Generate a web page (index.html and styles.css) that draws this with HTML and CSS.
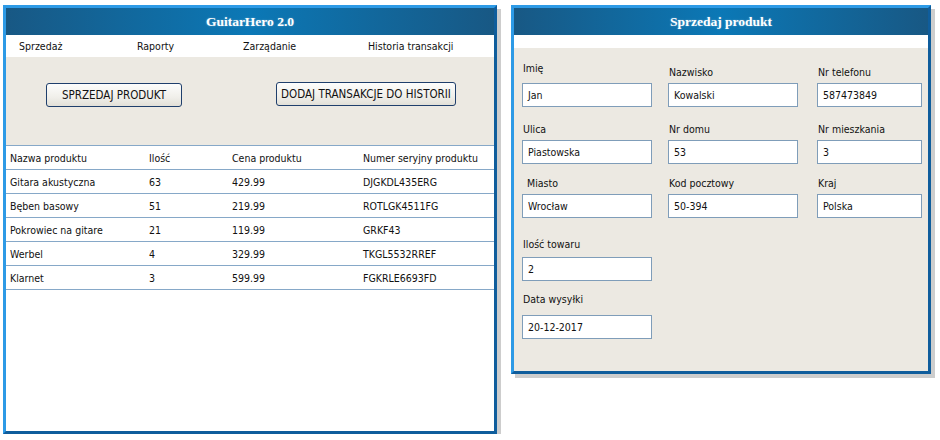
FILE: index.html
```html
<!DOCTYPE html>
<html lang="pl">
<head>
<meta charset="utf-8">
<title>GuitarHero 2.0</title>
<link rel="stylesheet" href="styles.css">
</head>
<body>
<div class="desk">
  <section class="win win-main">
    <header class="win-title">GuitarHero 2.0</header>
    <nav class="menu">
      <span>Sprzedaż</span>
      <span>Raporty</span>
      <span>Zarządanie</span>
      <span>Historia transakcji</span>
    </nav>
    <div class="toolbar">
      <button class="btn btn-sell">SPRZEDAJ PRODUKT</button>
      <button class="btn btn-add">DODAJ TRANSAKCJE DO HISTORII</button>
    </div>
    <div class="table">
      <div class="row head"><span>Nazwa produktu</span><span>Ilość</span><span>Cena produktu</span><span>Numer seryjny produktu</span></div>
      <div class="row"><span>Gitara akustyczna</span><span>63</span><span>429.99</span><span>DJGKDL435ERG</span></div>
      <div class="row"><span>Bęben basowy</span><span>51</span><span>219.99</span><span>ROTLGK4511FG</span></div>
      <div class="row"><span>Pokrowiec na gitare</span><span>21</span><span>119.99</span><span>GRKF43</span></div>
      <div class="row"><span>Werbel</span><span>4</span><span>329.99</span><span>TKGL5532RREF</span></div>
      <div class="row"><span>Klarnet</span><span>3</span><span>599.99</span><span>FGKRLE6693FD</span></div>
    </div>
  </section>

  <section class="win win-form">
    <header class="win-title">Sprzedaj produkt</header>
    <div class="strip"></div>
    <div class="form">
      <div class="frow r1">
        <label class="field"><span class="lbl up">Imię</span><span class="inp">Jan</span></label>
        <label class="field"><span class="lbl">Nazwisko</span><span class="inp">Kowalski</span></label>
        <label class="field narrow"><span class="lbl">Nr telefonu</span><span class="inp">587473849</span></label>
      </div>
      <div class="frow r2">
        <label class="field"><span class="lbl">Ulica</span><span class="inp">Piastowska</span></label>
        <label class="field"><span class="lbl">Nr domu</span><span class="inp">53</span></label>
        <label class="field narrow"><span class="lbl">Nr mieszkania</span><span class="inp">3</span></label>
      </div>
      <div class="frow r3">
        <label class="field"><span class="lbl shift">Miasto</span><span class="inp">Wrocław</span></label>
        <label class="field"><span class="lbl">Kod pocztowy</span><span class="inp">50-394</span></label>
        <label class="field narrow"><span class="lbl">Kraj</span><span class="inp">Polska</span></label>
      </div>
      <div class="frow r4">
        <label class="field"><span class="lbl">Ilość towaru</span><span class="inp">2</span></label>
      </div>
      <div class="frow r5">
        <label class="field"><span class="lbl">Data wysyłki</span><span class="inp">20-12-2017</span></label>
      </div>
    </div>
  </section>
</div>
</body>
</html>
```

FILE: styles.css
```css
* { box-sizing: border-box; }
html, body { margin: 0; padding: 0; background: #ffffff; }
body {
  font-family: "DejaVu Sans Condensed", "Liberation Sans", sans-serif;
  font-size: 10.5px;
  color: #111;
}
.desk {
  display: flex;
  align-items: flex-start;
  gap: 14px;
  padding: 5px 0 0 3px;
}
.win {
  border: 3px solid #1a86d4;
  border-color: #2d9ae6 #0f5d9c #0f5d9c #2d9ae6;
  box-shadow: 4px 4px 0 #cdcdcd;
  background: #fff;
  display: flex;
  flex-direction: column;
}
.win-main { width: 494px; height: 429px; }
.win-form { width: 420px; height: 369px; }
.win-title {
  height: 27px;
  display: flex;
  align-items: center;
  justify-content: center;
  background: linear-gradient(to right, #185884 0%, #0b78b6 50%, #185884 100%);
  color: #fff;
  font-family: "Liberation Serif", "DejaVu Serif", serif;
  font-weight: bold;
  font-size: 13.5px;
  text-shadow: 0 0 2px rgba(255,255,255,0.35);
}
.menu {
  height: 22px;
  display: grid;
  grid-template-columns: 118px 106px 125px auto;
  align-items: center;
  padding-left: 13px;
  background: #fff;
}
.toolbar {
  height: 88px;
  background: #ece9e2;
  display: flex;
  align-items: flex-start;
  padding: 25px 0 0 40px;
  gap: 94px;
}
.btn {
  height: 24px;
  border: 1px solid #1f3f6c;
  border-radius: 3px;
  background: linear-gradient(#fdfdfc, #f0efea 60%, #e2e0d8);
  font-family: inherit;
  font-size: 11.5px;
  color: #111;
  padding: 0;
}
.btn-sell { width: 136px; margin-top: 1px; }
.btn-add { width: 180px; }
.table {
  border-top: 1px solid #86a8c8;
  display: flex;
  flex-direction: column;
}
.row {
  display: grid;
  grid-template-columns: 139px 83px 131px 1fr;
  height: 24px;
  align-items: center;
  padding-left: 4px;
  border-bottom: 1px solid #86a8c8;
}
.win-form .strip { height: 13px; background: #fff; }
.form {
  flex: 1;
  background: #ece9e2;
  padding: 0 0 0 8px;
}
.frow { display: flex; }
.field { display: flex; flex-direction: column; width: 146px; }
.field:nth-child(2) { width: 149px; }
.field.narrow { width: 105px; }
.lbl { height: 16px; line-height: 16px; padding-left: 1px; }
.lbl.up { position: relative; top: -4px; }
.lbl.shift { padding-left: 5px; }
.inp {
  width: 130px;
  height: 24px;
  border: 1px solid #7f9db9;
  background: #fff;
  line-height: 22px;
  padding-left: 5px;
}
.field.narrow .inp { width: 105px; }
.r1 { margin-top: 16px; }
.r1 .lbl { margin-bottom: 3px; }
.r2 { margin-top: 14px; }
.r2 .lbl { margin-bottom: 3px; }
.r3 { margin-top: 11px; }
.r3 .lbl { margin-bottom: 3px; }
.r4 { margin-top: 18px; }
.r4 .lbl { margin-bottom: 5px; }
.r5 { margin-top: 10px; }
.r5 .lbl { margin-bottom: 8px; }
```
